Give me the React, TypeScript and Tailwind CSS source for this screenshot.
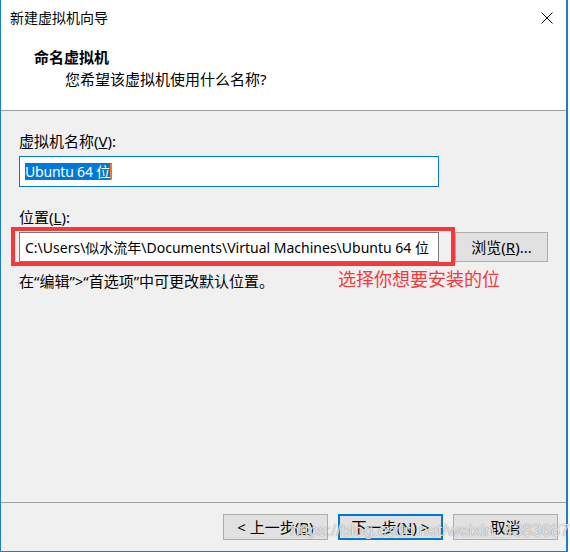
import React from 'react'

const cjk = { fontFamily: '"Noto Sans", "Noto Sans CJK SC", sans-serif' }

const Btn = ({ children, primary }: { children: React.ReactNode; primary?: boolean }) => (
  <button
    className={`w-[105px] h-[26px] flex items-center justify-center text-[15px] text-black bg-[#e1e1e1] ${
      primary ? 'border-2 border-[#0078d7]' : 'border border-[#adadad]'
    }`}
  >
    {children}
  </button>
)

export default function App() {
  return (
    <div className="w-[570px] h-[552px] bg-white" style={cjk}>
      <div className="w-[568px] h-[552px] flex flex-col border-l border-r-2 border-b border-[#1a7fd4] relative">
        {/* title bar */}
        <div className="h-[36px] flex items-center justify-between pl-[9px] pr-[13px] bg-white">
          <span className="text-[14px] text-black leading-none">新建虚拟机向导</span>
          <svg width="12" height="12" viewBox="0 0 12 12" className="text-black">
            <path d="M0.5 0.5 L11.5 11.5 M11.5 0.5 L0.5 11.5" stroke="currentColor" strokeWidth="1" fill="none" />
          </svg>
        </div>

        {/* header */}
        <div className="h-[75px] bg-white border-b border-[#a0a0a0] pt-[11px]">
          <div className="pl-[33px] text-[15px] font-bold text-black leading-[20px]">命名虚拟机</div>
          <div className="pl-[64px] text-[15px] text-black leading-[20px] mt-[2px]">您希望该虚拟机使用什么名称?</div>
        </div>

        {/* body */}
        <div className="flex-1 bg-[#f0f0f0] pl-[18px] pt-[20px]">
          <div className="text-[15px] leading-[20px] text-black">
            虚拟机名称(<span className="underline">V</span>):
          </div>
          <div className="mt-[5px] w-[420px] h-[31px] border border-[#0078d7] bg-white flex items-center pl-[5px]">
            <span className="bg-[#0078d7] text-white text-[14px] leading-[17px] tracking-[-0.2px]">Ubuntu 64 位</span>
            <span className="w-[2px] h-[17px] bg-[#f07a1a]"></span>
          </div>

          <div className="mt-[20px] text-[15px] leading-[20px] text-black">
            位置(<span className="underline">L</span>):
          </div>
          <div className="mt-[5px] flex items-center gap-[16px]">
            <div className="relative w-[420px] h-[30px] border border-[#7a7a7a] bg-white flex items-center pl-[5px]">
              <span className="text-[14px] text-black whitespace-nowrap">
                C:\Users\似水流年\Documents\Virtual Machines\Ubuntu 64 位
              </span>
              {/* red annotation box */}
              <div className="absolute left-[-9px] top-[-6px] w-[444px] h-[39px] border-[4px] border-[#f5393b]"></div>
            </div>
            <div className="w-[93px] h-[30px] bg-[#e1e1e1] border border-[#adadad] flex items-center justify-center text-[15px] text-black">
              浏览(<span className="underline">R</span>)...
            </div>
          </div>

          <div className="mt-[9px] flex items-center">
            <span className="w-[319px] text-[15px] leading-[20px] text-black">在“编辑”&gt;“首选项”中可更改默认位置。</span>
            <span className="text-[18px] leading-[22px] text-[#f5393b] -mt-[4px]">选择你想要安装的位</span>
          </div>
        </div>

        {/* footer */}
        <div className="h-[49px] bg-[#f0f0f0] border-t border-[#a0a0a0] flex justify-end items-start pt-[11px] pr-[8px] gap-[10px]">
          <Btn>&lt; 上一步(<span className="underline">B</span>)</Btn>
          <Btn primary>下一步(<span className="underline">N</span>) &gt;</Btn>
          <Btn>取消</Btn>
        </div>

        {/* watermark */}
        <div
          className="absolute left-[289px] top-[518px] text-[17px] text-white/80 whitespace-nowrap pointer-events-none"
          style={{ fontFamily: '"Liberation Sans", Arial, sans-serif', textShadow: '0 0 1px rgba(40,40,40,0.7)' }}
        >
          https://blog.csdn.net/weixin_43836875
        </div>
      </div>
    </div>
  )
}
